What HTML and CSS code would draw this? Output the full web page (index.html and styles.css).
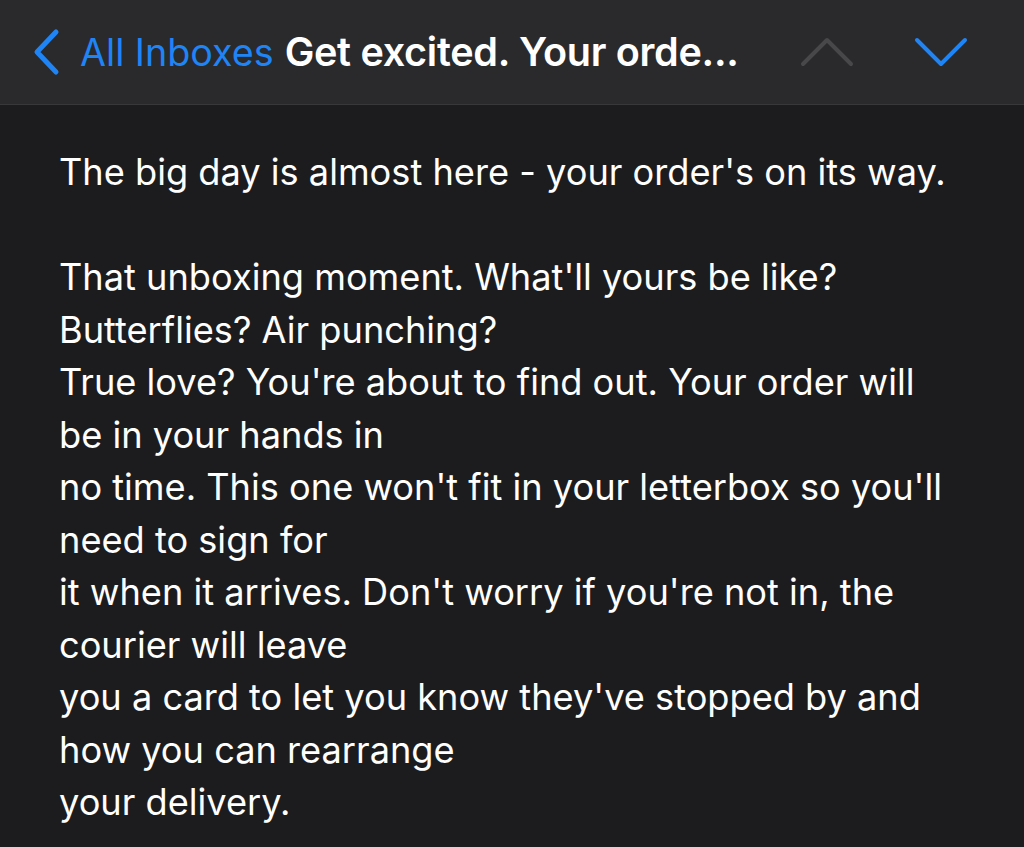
FILE: index.html
```html
<!DOCTYPE html>
<html>
<head>
<meta charset="utf-8">
<link rel="stylesheet" href="styles.css">
</head>
<body>
<header class="nav">
  <div class="nav-left">
    <svg class="back" width="28" height="48" viewBox="0 0 28 48"><path d="M24 4 L5 24 L24 44" fill="none" stroke="#1f84f5" stroke-width="5" stroke-linecap="round" stroke-linejoin="round"/></svg>
    <span class="back-label">All Inboxes</span>
    <span class="title">Get excited. Your orde...</span>
  </div>
  <div class="nav-right">
    <svg class="chev" width="54" height="32" viewBox="0 0 54 32"><path d="M3 28 L27 4 L51 28" fill="none" stroke="#48484a" stroke-width="4" stroke-linecap="round" stroke-linejoin="round"/></svg>
    <svg class="chev" width="54" height="32" viewBox="0 0 54 32"><path d="M3 4 L27 28 L51 4" fill="none" stroke="#1f84f5" stroke-width="4" stroke-linecap="round" stroke-linejoin="round"/></svg>
  </div>
</header>
<main class="body">
  <p class="para">The big day is almost here - your order's on its way.</p>
  <p class="para">That unboxing moment. What'll yours be like?<br>Butterflies? Air punching?<br>True love? You're about to find out. Your order will<br>be in your hands in<br>no time. This one won't fit in your letterbox so you'll<br>need to sign for<br>it when it arrives. Don't worry if you're not in, the<br>courier will leave<br>you a card to let you know they've stopped by and<br>how you can rearrange<br>your delivery.</p>
</main>
</body>
</html>
```
FILE: styles.css
```css
html, body {
  margin: 0;
  padding: 0;
  background: #1c1c1e;
  height: 100%;
  overflow: hidden;
}
body {
  font-family: Inter, "Noto Sans", sans-serif;
  color: #ffffff;
}
.nav {
  height: 105px;
  background: #2a2a2c;
  border-bottom: 1px solid #38383a;
  display: flex;
  align-items: center;
  justify-content: space-between;
  padding: 0 56px 0 32px;
  box-sizing: border-box;
}
.nav-left {
  display: flex;
  align-items: center;
}
.back {
  display: block;
  margin-right: 20px;
}
.back-label {
  color: #1f84f5;
  font-size: 37.7px;
  font-weight: 400;
  margin-right: 11px;
}
.title {
  font-size: 39.6px;
  font-weight: 600;
  letter-spacing: -0.3px;
}
.nav-right {
  display: flex;
  align-items: center;
  gap: 60px;
}
.chev {
  display: block;
}
.body {
  padding: 41px 0 0 59px;
}
.para {
  margin: 0 0 52.5px 0;
  font-size: 36.2px;
  line-height: 52.5px;
  white-space: nowrap;
}
```
